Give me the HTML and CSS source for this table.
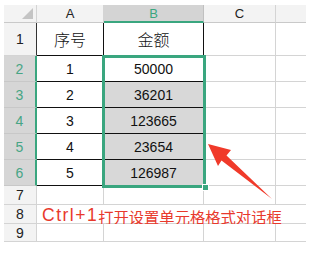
FILE: index.html
```html
<!DOCTYPE html>
<html>
<head>
<meta charset="utf-8">
<link rel="stylesheet" href="styles.css">
</head>
<body>
<div class="page">
  <div class="sheet">
    <div class="c corner"><span class="tri"></span></div>
    <div class="c colh">A</div>
    <div class="c colh csel">B</div>
    <div class="c colh">C</div>
    <div class="c colh last"></div>

    <div class="c rowh tb">1</div>
    <div class="c t zh">序号</div>
    <div class="c t zh">金额</div>
    <div class="c"></div>
    <div class="c last"></div>

    <div class="c rowh rsel">2</div>
    <div class="c t num">1</div>
    <div class="c t num">50000</div>
    <div class="c"></div>
    <div class="c last"></div>

    <div class="c rowh rsel">3</div>
    <div class="c t num">2</div>
    <div class="c t num fill">36201</div>
    <div class="c"></div>
    <div class="c last"></div>

    <div class="c rowh rsel">4</div>
    <div class="c t num">3</div>
    <div class="c t num fill">123665</div>
    <div class="c"></div>
    <div class="c last"></div>

    <div class="c rowh rsel">5</div>
    <div class="c t num">4</div>
    <div class="c t num fill">23654</div>
    <div class="c"></div>
    <div class="c last"></div>

    <div class="c rowh rsel">6</div>
    <div class="c t num">5</div>
    <div class="c t num fill">126987</div>
    <div class="c"></div>
    <div class="c last"></div>

    <div class="c rowh">7</div>
    <div class="c"></div>
    <div class="c"></div>
    <div class="c"></div>
    <div class="c last"></div>

    <div class="c rowh">8</div>
    <div class="c note"><span class="lat">Ctrl+1</span><span class="cjk">打开设置单元格格式对话框</span></div>

    <div class="c rowh">9</div>
    <div class="c"></div>
    <div class="c"></div>
    <div class="c"></div>
    <div class="c last"></div>

    <div class="selection"><span class="handle"></span></div>
  </div>
  <svg class="arrow" width="315" height="255" viewBox="0 0 315 255">
    <polygon points="208,144 231,150 226.5,155.5 272,199 221.5,160.5 218,166" fill="#f03a2a"/>
  </svg>
</div>
</body>
</html>
```
FILE: styles.css
```css
html, body {
  margin: 0;
  padding: 0;
  background: #ffffff;
}
.page {
  position: relative;
  width: 315px;
  height: 255px;
  overflow: hidden;
  padding: 5px 0 0 4px;
  box-sizing: border-box;
}
.sheet {
  position: relative;
  display: grid;
  grid-template-columns: 33px 67px 100px 72px 30px;
  grid-template-rows: 18px 33px 26px 26px 26px 26px 26px 19px 19px 18px;
  font-family: "Liberation Sans", "Noto Sans CJK SC", sans-serif;
  color: #111;
}
.c {
  box-sizing: border-box;
  border-right: 1px solid #d4d4d4;
  border-bottom: 1px solid #d4d4d4;
  display: flex;
  align-items: center;
  justify-content: center;
  background: #ffffff;
}
.c.last {
  border-right: none;
}
.corner {
  background: #f3f3f3;
  border-bottom-color: #c9c9c9;
  position: relative;
}
.tri {
  position: absolute;
  right: 3px;
  bottom: 3px;
  width: 0;
  height: 0;
  border-left: 11px solid transparent;
  border-bottom: 11px solid #c4c4c4;
}
.colh {
  background: #f3f3f3;
  border-bottom-color: #c9c9c9;
  font-size: 13px;
  color: #222;
  font-family: "Liberation Sans", sans-serif;
}
.colh.csel {
  background: #d4d4d4;
  color: #3aa67f;
  border-bottom: 2px solid #3aa67f;
  border-right-color: #c0c0c0;
}
.rowh {
  background: #f3f3f3;
  font-size: 14px;
  color: #222;
}
.rowh.tb {
  border-right-color: #333;
}
.rowh.rsel {
  background: #d6d6d6;
  color: #47a585;
  border-right: 2px solid #3aa67f;
  border-bottom-color: #c8c8c8;
}
.t {
  border-right-color: #111;
  border-bottom-color: #111;
}
.zh {
  font-family: "Noto Sans CJK SC", sans-serif;
  font-size: 16px;
  font-weight: 300;
}
.num {
  font-size: 14px;
}
.fill {
  background: #d8d8d8;
}
.note {
  grid-column: 2 / 6;
  border-right: none;
  justify-content: flex-start;
  align-items: center;
  padding: 3px 0 0 5px;
  white-space: nowrap;
  color: #e8392c;
  overflow: visible;
}
.lat {
  font-family: "Liberation Sans", sans-serif;
  font-size: 17.5px;
  letter-spacing: 1.5px;
}
.cjk {
  font-family: "Noto Sans CJK SC", sans-serif;
  font-size: 15.3px;
  font-weight: 400;
}
.selection {
  position: absolute;
  left: 98px;
  top: 50px;
  width: 104px;
  height: 133px;
  box-sizing: border-box;
  border: 3px solid #3aa67f;
}
.handle {
  position: absolute;
  right: -6px;
  bottom: -6px;
  width: 5px;
  height: 5px;
  background: #3aa67f;
  border: 1px solid #ffffff;
}
.arrow {
  position: absolute;
  left: 0;
  top: 0;
  pointer-events: none;
}
```
